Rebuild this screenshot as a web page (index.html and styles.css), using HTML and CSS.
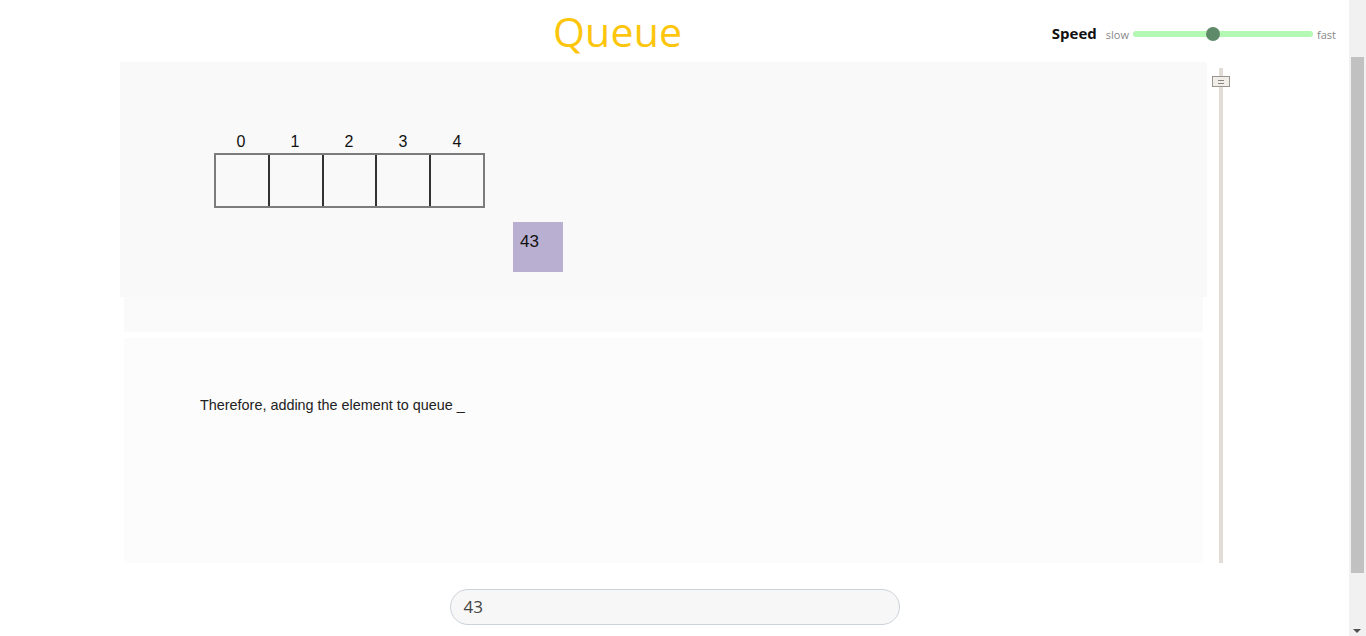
FILE: index.html
```html
<!DOCTYPE html>
<html>
<head>
<meta charset="utf-8">
<link rel="stylesheet" href="styles.css">
</head>
<body>
<div class="page">
  <header class="header">
    <h1 class="title">Queue</h1>
    <div class="speed">
      <span class="speed-label">Speed</span>
      <span class="speed-end">slow</span>
      <div class="speed-track"><div class="speed-thumb"></div></div>
      <span class="speed-end">fast</span>
    </div>
  </header>
  <main class="main">
    <div class="panels">
      <section class="canvas">
        <div class="queue">
          <div class="labels">
            <span>0</span><span>1</span><span>2</span><span>3</span><span>4</span>
          </div>
          <div class="cells">
            <div class="cell"></div><div class="cell"></div><div class="cell"></div><div class="cell"></div><div class="cell"></div>
          </div>
        </div>
        <div class="item">43</div>
      </section>
      <div class="strip"></div>
      <section class="explain">
        <p class="explain-text">Therefore, adding the element to queue _</p>
      </section>
    </div>
    <div class="vslider">
      <div class="vtrack"></div>
      <div class="vhandle"><span></span><span></span></div>
    </div>
  </main>
  <div class="input-row">
    <div class="input">43</div>
  </div>
</div>
<div class="scrollbar">
  <div class="scroll-thumb"></div>
  <div class="scroll-arrow"></div>
</div>
</body>
</html>
```

FILE: styles.css
```css
html, body {
  margin: 0;
  padding: 0;
  background: #ffffff;
  overflow: hidden;
  height: 100%;
}
.page {
  width: 1349px;
  font-family: "Open Sans", "Noto Sans", sans-serif;
}
.header {
  height: 62px;
  display: flex;
  align-items: center;
}
.title {
  margin: 0 0 0 553px;
  font-size: 41px;
  font-weight: 400;
  color: #fdc60c;
  line-height: 62px;
  letter-spacing: 0.2px;
}
.speed {
  margin-left: auto;
  margin-right: 13px;
  display: flex;
  align-items: center;
  gap: 4px;
  margin-top: 6px;
}
.speed-label {
  font-weight: 700;
  font-size: 15px;
  color: #111;
  margin-right: 5px;
  position: relative;
  top: -1px;
}
.speed-end {
  font-size: 11px;
  color: #888;
}
.speed-track {
  width: 180px;
  height: 6px;
  border-radius: 3px;
  background: #b3f8b3;
  position: relative;
}
.speed-thumb {
  position: absolute;
  left: 73px;
  top: -4px;
  width: 14px;
  height: 14px;
  border-radius: 50%;
  background: #5f8a69;
}
.main {
  display: flex;
  height: 501px;
}
.panels {
  margin-left: 120px;
  width: 1087px;
  display: flex;
  flex-direction: column;
}
.canvas {
  height: 235px;
  background: #f9f9f9;
  position: relative;
  font-family: "Liberation Sans", Arial, sans-serif;
}
.queue {
  position: absolute;
  left: 94px;
  top: 68px;
}
.labels {
  display: flex;
  font-size: 16px;
  color: #111;
  height: 23px;
}
.labels span {
  width: 54px;
  text-align: center;
  line-height: 23px;
}
.cells {
  display: flex;
  border: 2px solid #7c7c7c;
  width: 267px;
  height: 51px;
}
.cell {
  flex: 1;
  border-left: 2px solid #333;
}
.cell:first-child {
  border-left: none;
}
.item {
  position: absolute;
  left: 393px;
  top: 160px;
  width: 50px;
  height: 50px;
  background: #b9afd0;
  font-size: 17px;
  color: #111;
  box-sizing: border-box;
  padding: 10px 0 0 7px;
  line-height: 20px;
}
.strip {
  margin: 0 4px;
  height: 35px;
  background: #fafafa;
}
.explain {
  margin: 6px 4px 0;
  height: 225px;
  background: #fcfcfc;
  font-family: "Liberation Sans", Arial, sans-serif;
  padding: 59px 0 0 76px;
  box-sizing: border-box;
}
.explain-text {
  margin: 0;
  font-size: 14.4px;
  color: #222;
}
.vslider {
  width: 22px;
  margin-left: 5px;
  position: relative;
}
.vtrack {
  position: absolute;
  left: 7px;
  top: 6px;
  bottom: 0;
  width: 4px;
  background: #e1ddd6;
}
.vhandle {
  position: absolute;
  left: 0;
  top: 14px;
  width: 16px;
  height: 9px;
  background: #f1eeea;
  border: 1px solid #9a9590;
  display: flex;
  flex-direction: column;
  align-items: center;
  justify-content: center;
  gap: 2px;
}
.vhandle span {
  width: 6px;
  height: 1px;
  background: #8a857f;
}
.input-row {
  display: flex;
  justify-content: center;
  margin-top: 26px;
}
.input {
  width: 450px;
  height: 36px;
  box-sizing: border-box;
  border: 1px solid #ccd2da;
  border-radius: 18px;
  background: #f7f7f7;
  font-size: 17px;
  color: #444;
  padding-left: 13px;
  line-height: 34px;
}
.scrollbar {
  position: fixed;
  top: 0;
  right: 0;
  width: 17px;
  height: 636px;
  background: #f1f1f1;
}
.scroll-thumb {
  position: absolute;
  left: 2px;
  top: 57px;
  width: 13px;
  height: 516px;
  background: #c1c1c1;
}
.scroll-arrow {
  position: absolute;
  left: 4px;
  bottom: 3px;
  width: 0;
  height: 0;
  border-left: 4px solid transparent;
  border-right: 4px solid transparent;
  border-top: 4px solid #505050;
}
```
